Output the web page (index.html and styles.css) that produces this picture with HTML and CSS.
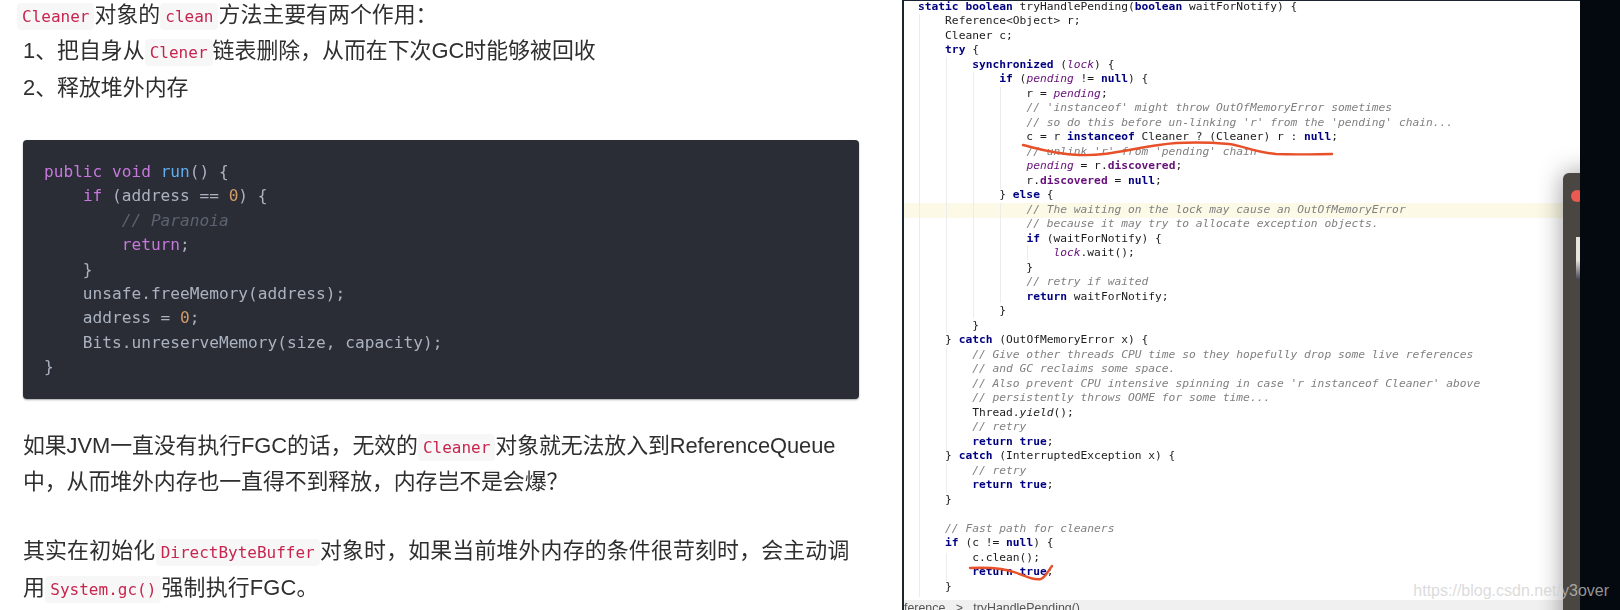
FILE: index.html
```html
<!DOCTYPE html>
<html lang="zh-CN">
<head>
<meta charset="utf-8">
<title>Cleaner</title>
<link rel="stylesheet" href="styles.css">
</head>
<body>
<main class="shot">
  <article class="doc">
    <p><code>Cleaner</code> 对象的 <code>clean</code> 方法主要有两个作用：<br>1、把自身从 <code>Clener</code> 链表删除，从而在下次GC时能够被回收<br>2、释放堆外内存</p>
    <div class="dark">
      <div class="ln"><span class="k">public</span> <span class="k">void</span> <span class="f">run</span>() {</div>
      <div class="ln">    <span class="k">if</span> (address == <span class="n">0</span>) {</div>
      <div class="ln">        <span class="c">// Paranoia</span></div>
      <div class="ln">        <span class="k">return</span>;</div>
      <div class="ln">    }</div>
      <div class="ln">    unsafe.freeMemory(address);</div>
      <div class="ln">    address = <span class="n">0</span>;</div>
      <div class="ln">    Bits.unreserveMemory(size, capacity);</div>
      <div class="ln">}</div>
    </div>
    <p class="second">如果JVM一直没有执行FGC的话，无效的 <code>Cleaner</code> 对象就无法放入到ReferenceQueue<br>中，从而堆外内存也一直得不到释放，内存岂不是会爆？</p>
    <p class="third">其实在初始化 <code>DirectByteBuffer</code> 对象时，如果当前堆外内存的条件很苛刻时，会主动调<br>用 <code>System.gc()</code> 强制执行FGC。</p>
  </article>

  <section class="ide">
    <div class="editor">
      <div class="caret-line"></div>
      <i class="guide g1"></i><i class="guide g2"></i><i class="guide g3"></i><i class="guide g4"></i><i class="guide g5"></i><i class="guide g6"></i><i class="guide g7"></i><i class="guide g8"></i><i class="guide g9"></i>
      <div class="java">
        <div class="ln"><b>static boolean</b> tryHandlePending(<b>boolean</b> waitForNotify) {</div>
        <div class="ln">    Reference&lt;Object&gt; r;</div>
        <div class="ln">    Cleaner c;</div>
        <div class="ln">    <b>try</b> {</div>
        <div class="ln">        <b>synchronized</b> (<em>lock</em>) {</div>
        <div class="ln">            <b>if</b> (<em>pending</em> != <b>null</b>) {</div>
        <div class="ln">                r = <em>pending</em>;</div>
        <div class="ln">                <s>// 'instanceof' might throw OutOfMemoryError sometimes</s></div>
        <div class="ln">                <s>// so do this before un-linking 'r' from the 'pending' chain...</s></div>
        <div class="ln">                c = r <b>instanceof</b> Cleaner ? (Cleaner) r : <b>null</b>;</div>
        <div class="ln">                <s>// unlink 'r' from 'pending' chain</s></div>
        <div class="ln">                <em>pending</em> = r.<u>discovered</u>;</div>
        <div class="ln">                r.<u>discovered</u> = <b>null</b>;</div>
        <div class="ln">            } <b>else</b> {</div>
        <div class="ln">                <s>// The waiting on the lock may cause an OutOfMemoryError</s></div>
        <div class="ln">                <s>// because it may try to allocate exception objects.</s></div>
        <div class="ln">                <b>if</b> (waitForNotify) {</div>
        <div class="ln">                    <em>lock</em>.wait();</div>
        <div class="ln">                }</div>
        <div class="ln">                <s>// retry if waited</s></div>
        <div class="ln">                <b>return</b> waitForNotify;</div>
        <div class="ln">            }</div>
        <div class="ln">        }</div>
        <div class="ln">    } <b>catch</b> (OutOfMemoryError x) {</div>
        <div class="ln">        <s>// Give other threads CPU time so they hopefully drop some live references</s></div>
        <div class="ln">        <s>// and GC reclaims some space.</s></div>
        <div class="ln">        <s>// Also prevent CPU intensive spinning in case 'r instanceof Cleaner' above</s></div>
        <div class="ln">        <s>// persistently throws OOME for some time...</s></div>
        <div class="ln">        Thread.<i>yield</i>();</div>
        <div class="ln">        <s>// retry</s></div>
        <div class="ln">        <b>return true</b>;</div>
        <div class="ln">    } <b>catch</b> (InterruptedException x) {</div>
        <div class="ln">        <s>// retry</s></div>
        <div class="ln">        <b>return true</b>;</div>
        <div class="ln">    }</div>
        <div class="ln blank"></div>
        <div class="ln">    <s>// Fast path for cleaners</s></div>
        <div class="ln">    <b>if</b> (c != <b>null</b>) {</div>
        <div class="ln">        c.clean();</div>
        <div class="ln">        <b>return true</b>;</div>
        <div class="ln">    }</div>
      </div>
      <svg class="ink" viewBox="0 0 676 600" aria-hidden="true">
        <path d="M119 144C135 148 150 153 175 154C205 155 225 148 255 144C275 141 300 141 325 143C340 145 350 151 372 153C395 154 415 153 428 153"/>
        <path d="M66 567C85 566 100 567 113 572C123 576 130 579 137 578C142 576 144 570 148 565"/>
      </svg>
    </div>
    <div class="crumbs">ference &nbsp;&nbsp;&gt;&nbsp;&nbsp; tryHandlePending()</div>
    <aside class="window">
      <span class="dot"></span>
      <span class="thumb"></span>
    </aside>
  </section>
  <div class="desk"></div>
  <div class="mark">https://blog.csdn.net/y3over</div>
</main>
</body>
</html>
```
FILE: styles.css
```css
* { box-sizing: border-box; }
html, body { margin: 0; padding: 0; background: #fff; }
.shot {
  position: relative;
  display: flex;
  width: 1620px;
  height: 610px;
  overflow: hidden;
}
.doc {
  width: 902px;
  flex: none;
  background: #fff;
  padding: 0 0 0 23px;
  color: #2f2f2f;
  font-family: "Liberation Sans", "Noto Sans CJK SC", sans-serif;
  font-size: 21.9px;
  line-height: 36.3px;
  filter: blur(0.35px);
}
.doc p { margin: 0; white-space: nowrap; }
.doc p:first-child { margin-top: -3px; }
.doc code {
  font-family: "DejaVu Sans Mono", monospace;
  font-size: 16px;
  line-height: 1;
  letter-spacing: 0;
  color: #c7254e;
  background: #f7f7f7;
  border-radius: 4px;
  padding: 4px 5px;
  margin: 0 -6px;
}
.ln { white-space: pre; }
.blank { height: 14.5px; }
.dark {
  width: 836px;
  height: 259px;
  margin: 34px 0 29px;
  padding: 20px 21px;
  background: #2b2d36;
  border-radius: 4px;
  box-shadow: 0 1px 2px rgba(0, 0, 0, 0.35);
  color: #abb2bf;
  font-family: "DejaVu Sans Mono", monospace;
  font-size: 16.15px;
  line-height: 24.4px;
}
.k { color: #c678dd; }
.f { color: #61aeee; }
.n { color: #d19a66; }
.c { color: #5c6370; font-style: italic; }
.doc .second { margin-bottom: 33px; letter-spacing: -0.08px; }
.doc .third { letter-spacing: 0.17px; }

.ide {
  position: relative;
  width: 678px;
  flex: none;
  display: flex;
  flex-direction: column;
  background: #fff;
  border-left: 2px solid #1b2431;
  border-top: 1px solid #1b2431;
  overflow: hidden;
}
.editor {
  position: relative;
  flex: 1;
  min-height: 0;
  filter: blur(0.45px);
}
.java {
  position: relative;
  margin: -1.5px 0 0;
  padding-left: 14px;
  color: #1c1c1c;
  font-family: "DejaVu Sans Mono", monospace;
  font-size: 11.25px;
  line-height: 14.5px;
}
.java b { color: #000080; font-weight: bold; }
.java em { color: #660e7a; font-style: italic; }
.java u { color: #660e7a; font-weight: bold; text-decoration: none; }
.java s { color: #808080; font-style: italic; text-decoration: none; }
.caret-line {
  position: absolute;
  left: 0;
  right: 0;
  top: 202px;
  height: 14.5px;
  background: #fcf9e6;
}
.guide {
  position: absolute;
  width: 1px;
  background: #ececec;
}
.g1 { left: 15px; top: 13px; height: 583px; }
.g2 { left: 42px; top: 56px; height: 276px; }
.g3 { left: 42px; top: 347px; height: 103px; }
.g4 { left: 42px; top: 462px; height: 30px; }
.g5 { left: 69px; top: 71px; height: 246px; }
.g6 { left: 96px; top: 86px; height: 102px; }
.g7 { left: 96px; top: 202px; height: 100px; }
.g8 { left: 123px; top: 245px; height: 14px; }
.g9 { left: 42px; top: 552px; height: 28px; }
.ink {
  position: absolute;
  left: 0;
  top: 0;
  width: 676px;
  height: 600px;
  fill: none;
  stroke: #e8502a;
  stroke-width: 2.4;
  stroke-linecap: round;
  stroke-linejoin: round;
}
.crumbs {
  height: 10px;
  flex: none;
  background: #f0f0f0;
  color: #555;
  font-family: "Liberation Sans", sans-serif;
  font-size: 12.4px;
  line-height: 17px;
  white-space: nowrap;
  overflow: hidden;
  filter: blur(0.4px);
}
.window {
  position: absolute;
  left: 659px;
  top: 172px;
  width: 60px;
  height: 470px;
  background: #4a4641;
  border-radius: 6px 0 0 0;
  box-shadow: 0 0 26px rgba(0, 0, 0, 0.4);
}
.dot {
  position: absolute;
  left: 8px;
  top: 17px;
  width: 12px;
  height: 12px;
  border-radius: 50%;
  background: #ea5a50;
}
.thumb {
  position: absolute;
  left: 13px;
  top: 64px;
  width: 8px;
  height: 42px;
  background: linear-gradient(#e8e4dc 55%, #4a4a5a);
}
.desk {
  flex: 1;
  background: #04080f;
  position: relative;
}
.mark {
  position: absolute;
  right: 11px;
  top: 581px;
  color: rgba(205, 205, 205, 0.72);
  font-family: "Liberation Sans", sans-serif;
  font-size: 16px;
  line-height: 20px;
  white-space: nowrap;
}
```
